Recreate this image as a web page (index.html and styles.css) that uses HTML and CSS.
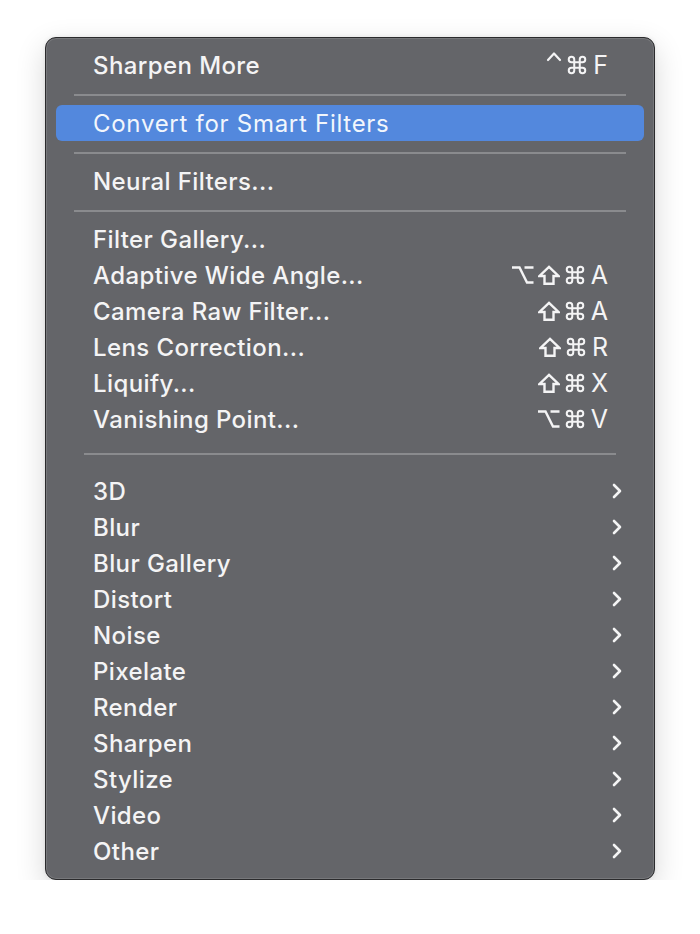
FILE: index.html
```html
<!DOCTYPE html>
<html>
<head>
<meta charset="utf-8">
<link rel="stylesheet" href="styles.css">
</head>
<body>
<div class="menu">
  <div class="item"><span class="label">Sharpen More</span><span class="key"><svg class="sym ctrl" viewBox="0 0 16 20"><path d="M2 9 L8 2.5 L14 9"/></svg><svg class="sym cmd" viewBox="0 0 24 24"><path d="M15 6v12a3 3 0 1 0 3-3H6a3 3 0 1 0 3 3V6a3 3 0 1 0-3 3h12a3 3 0 1 0-3-3"/></svg><span class="letter">F</span></span></div>
  <div class="sep"></div>
  <div class="item active"><span class="label">Convert for Smart Filters</span></div>
  <div class="sep"></div>
  <div class="item"><span class="label">Neural Filters...</span></div>
  <div class="sep"></div>
  <div class="item"><span class="label">Filter Gallery...</span></div>
  <div class="item"><span class="label">Adaptive Wide Angle...</span><span class="key"><svg class="sym opt" viewBox="0 0 23 20"><path d="M1 2.5 H8.5 L16 17.5 H22.5 M13.5 2.5 H22.5"/></svg><svg class="sym shift" viewBox="0 0 22 20"><path d="M11 1.8 L20.5 11 H15.5 V18.8 H6.5 V11 H1.5 Z"/></svg><svg class="sym cmd" viewBox="0 0 24 24"><path d="M15 6v12a3 3 0 1 0 3-3H6a3 3 0 1 0 3 3V6a3 3 0 1 0-3 3h12a3 3 0 1 0-3-3"/></svg><span class="letter">A</span></span></div>
  <div class="item"><span class="label">Camera Raw Filter...</span><span class="key"><svg class="sym shift" viewBox="0 0 22 20"><path d="M11 1.8 L20.5 11 H15.5 V18.8 H6.5 V11 H1.5 Z"/></svg><svg class="sym cmd" viewBox="0 0 24 24"><path d="M15 6v12a3 3 0 1 0 3-3H6a3 3 0 1 0 3 3V6a3 3 0 1 0-3 3h12a3 3 0 1 0-3-3"/></svg><span class="letter">A</span></span></div>
  <div class="item"><span class="label">Lens Correction...</span><span class="key"><svg class="sym shift" viewBox="0 0 22 20"><path d="M11 1.8 L20.5 11 H15.5 V18.8 H6.5 V11 H1.5 Z"/></svg><svg class="sym cmd" viewBox="0 0 24 24"><path d="M15 6v12a3 3 0 1 0 3-3H6a3 3 0 1 0 3 3V6a3 3 0 1 0-3 3h12a3 3 0 1 0-3-3"/></svg><span class="letter">R</span></span></div>
  <div class="item"><span class="label">Liquify...</span><span class="key"><svg class="sym shift" viewBox="0 0 22 20"><path d="M11 1.8 L20.5 11 H15.5 V18.8 H6.5 V11 H1.5 Z"/></svg><svg class="sym cmd" viewBox="0 0 24 24"><path d="M15 6v12a3 3 0 1 0 3-3H6a3 3 0 1 0 3 3V6a3 3 0 1 0-3 3h12a3 3 0 1 0-3-3"/></svg><span class="letter">X</span></span></div>
  <div class="item"><span class="label">Vanishing Point...</span><span class="key"><svg class="sym opt" viewBox="0 0 23 20"><path d="M1 2.5 H8.5 L16 17.5 H22.5 M13.5 2.5 H22.5"/></svg><svg class="sym cmd" viewBox="0 0 24 24"><path d="M15 6v12a3 3 0 1 0 3-3H6a3 3 0 1 0 3 3V6a3 3 0 1 0-3 3h12a3 3 0 1 0-3-3"/></svg><span class="letter">V</span></span></div>
  <div class="sep wide"></div>
  <div class="item"><span class="label">3D</span><svg class="chev" viewBox="0 0 10 16"><path d="M2 2 L8 8 L2 14"/></svg></div>
  <div class="item"><span class="label">Blur</span><svg class="chev" viewBox="0 0 10 16"><path d="M2 2 L8 8 L2 14"/></svg></div>
  <div class="item"><span class="label">Blur Gallery</span><svg class="chev" viewBox="0 0 10 16"><path d="M2 2 L8 8 L2 14"/></svg></div>
  <div class="item"><span class="label">Distort</span><svg class="chev" viewBox="0 0 10 16"><path d="M2 2 L8 8 L2 14"/></svg></div>
  <div class="item"><span class="label">Noise</span><svg class="chev" viewBox="0 0 10 16"><path d="M2 2 L8 8 L2 14"/></svg></div>
  <div class="item"><span class="label">Pixelate</span><svg class="chev" viewBox="0 0 10 16"><path d="M2 2 L8 8 L2 14"/></svg></div>
  <div class="item"><span class="label">Render</span><svg class="chev" viewBox="0 0 10 16"><path d="M2 2 L8 8 L2 14"/></svg></div>
  <div class="item"><span class="label">Sharpen</span><svg class="chev" viewBox="0 0 10 16"><path d="M2 2 L8 8 L2 14"/></svg></div>
  <div class="item"><span class="label">Stylize</span><svg class="chev" viewBox="0 0 10 16"><path d="M2 2 L8 8 L2 14"/></svg></div>
  <div class="item"><span class="label">Video</span><svg class="chev" viewBox="0 0 10 16"><path d="M2 2 L8 8 L2 14"/></svg></div>
  <div class="item"><span class="label">Other</span><svg class="chev" viewBox="0 0 10 16"><path d="M2 2 L8 8 L2 14"/></svg></div>
</div>
</body>
</html>
```
FILE: styles.css
```css
html, body {
  margin: 0;
  padding: 0;
  background: #ffffff;
}
body {
  padding: 37px 0 0 45px;
  font-family: Inter, "Liberation Sans", sans-serif;
}
.menu {
  box-sizing: border-box;
  width: 610px;
  height: 843px;
  background: #646569;
  border: 1px solid #2b2b2d;
  border-radius: 11px;
  padding: 9px 0 0 0;
  box-shadow: 0 10px 30px rgba(0, 0, 0, 0.16), 0 0 4px rgba(0, 0, 0, 0.08), inset 0 0 0 1px #77787b;
}
.item {
  display: flex;
  align-items: center;
  height: 36px;
  margin: 0 10px;
  padding: 0 24px 0 37px;
  border-radius: 6px;
  color: #f4f4f5;
  font-size: 24px;
  font-weight: 500;
  letter-spacing: 0.4px;
}
.item.active {
  background: #5388dd;
  color: #f2f6fc;
  font-weight: 400;
  letter-spacing: 0.72px;
}
.label {
  flex: 1;
  white-space: nowrap;
}
.key {
  display: flex;
  align-items: center;
  gap: 4px;
  margin-right: 12px;
  height: 36px;
}
.letter {
  font-size: 25px;
  font-weight: 400;
  margin-left: 1px;
  letter-spacing: 0;
}
.sym {
  display: block;
  flex: none;
}
.sym path {
  fill: none;
  stroke: #f4f4f5;
  stroke-width: 2.4;
  stroke-linecap: butt;
  stroke-linejoin: miter;
}
.sym.cmd {
  width: 22px;
  height: 22px;
}
.sym.cmd path {
  stroke-width: 2.2;
  stroke-linecap: round;
  stroke-linejoin: round;
}
.sym.shift {
  width: 22px;
  height: 20px;
}
.sym.opt {
  width: 23px;
  height: 20px;
}
.sym.ctrl {
  width: 16px;
  height: 20px;
  margin-top: -9px;
}
.sym.ctrl path {
  stroke-width: 2.2;
  stroke-linecap: round;
  stroke-linejoin: round;
}
.chev {
  width: 10px;
  height: 16px;
  margin-right: -2px;
}
.chev path {
  fill: none;
  stroke: #f4f4f5;
  stroke-width: 2.6;
  stroke-linecap: round;
  stroke-linejoin: round;
}
.sep {
  height: 2px;
  margin: 11px 28px 9px 28px;
  background: #8a8b8e;
}
.sep.wide {
  margin: 16px 38px 18px 38px;
}
```
